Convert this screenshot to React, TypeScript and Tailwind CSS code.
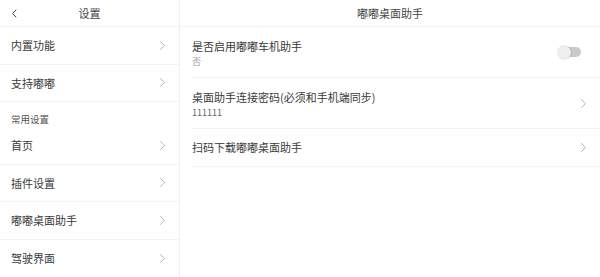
import React from 'react';

const FONT = { fontFamily: '"Noto Sans CJK SC", "Noto Sans", sans-serif' };

const Chevron = ({ className = '' }: { className?: string }) => (
  <svg width="7" height="11" viewBox="0 0 7 11" className={className} fill="none">
    <path d="M1.5 1.5l4 4-4 4" stroke="#b0b0b0" strokeWidth="0.9" strokeLinecap="round" strokeLinejoin="round" />
  </svg>
);

const LeftRow = ({ label, last = false }: { label: string; last?: boolean }) => (
  <div className={`h-[38px] flex items-center justify-between pl-[11px] pr-[13px] ${last ? '' : 'border-b border-[#f3f3f3]'}`}>
    <span className="text-[11px] text-[#3a3a3a]">{label}</span>
    <Chevron />
  </div>
);

const Toggle = () => (
  <div className="relative w-[24px] h-[14px] flex items-center">
    <div className="absolute left-[6px] w-[17px] h-[10px] rounded-full bg-[#c9c9c9]" />
    <div className="absolute left-0 w-[13px] h-[13px] rounded-full bg-[#efefef] shadow-[0_0_2px_rgba(0,0,0,0.25)]" />
  </div>
);

export default function App() {
  return (
    <div className="w-[600px] h-[277px] bg-white flex overflow-hidden select-none" style={FONT}>
      {/* left menu */}
      <div className="w-[180px] shrink-0 flex flex-col border-r border-[#f0f0f0]">
        <div className="h-[27px] shrink-0 relative flex items-center justify-center border-b border-[#f3f3f3]">
          <svg width="6" height="9" viewBox="0 0 6 9" className="absolute left-[11px]" fill="none">
            <path d="M5 1L1.5 4.5 5 8" stroke="#444" strokeWidth="1" strokeLinecap="round" strokeLinejoin="round" />
          </svg>
          <span className="text-[11px] text-[#444]">设置</span>
        </div>
        <LeftRow label="内置功能" />
        <LeftRow label="支持嘟嘟" />
        <div className="h-[25px] shrink-0 flex items-end pb-[1px] pl-[11px]">
          <span className="text-[9.5px] text-[#555]">常用设置</span>
        </div>
        <LeftRow label="首页" />
        <LeftRow label="插件设置" />
        <LeftRow label="嘟嘟桌面助手" />
        <LeftRow label="驾驶界面" last />
      </div>

      {/* right detail */}
      <div className="flex-1 flex flex-col">
        <div className="h-[27px] shrink-0 flex items-center justify-center border-b border-[#f3f3f3]">
          <span className="text-[11px] text-[#444]">嘟嘟桌面助手</span>
        </div>
        <div className="ml-[12px]">
          <div className="h-[51px] flex items-center justify-between pr-[18px] border-b border-[#f3f3f3]">
            <div className="flex flex-col leading-none pt-[3px]">
              <span className="text-[11px] text-[#3a3a3a]">是否启用嘟嘟车机助手</span>
              <span className="text-[9px] text-[#999] mt-[5px]">否</span>
            </div>
            <Toggle />
          </div>
          <div className="h-[51px] flex items-center justify-between pr-[13px] border-b border-[#f3f3f3]">
            <div className="flex flex-col leading-none pt-[3px]">
              <span className="text-[11px] text-[#3a3a3a]">桌面助手连接密码(必须和手机端同步)</span>
              <span className="text-[9px] text-[#666] mt-[5px]">111111</span>
            </div>
            <Chevron />
          </div>
          <div className="h-[38px] flex items-center justify-between pr-[13px] border-b border-[#f3f3f3]">
            <span className="text-[11px] text-[#3a3a3a]">扫码下载嘟嘟桌面助手</span>
            <Chevron />
          </div>
        </div>
      </div>
    </div>
  );
}
